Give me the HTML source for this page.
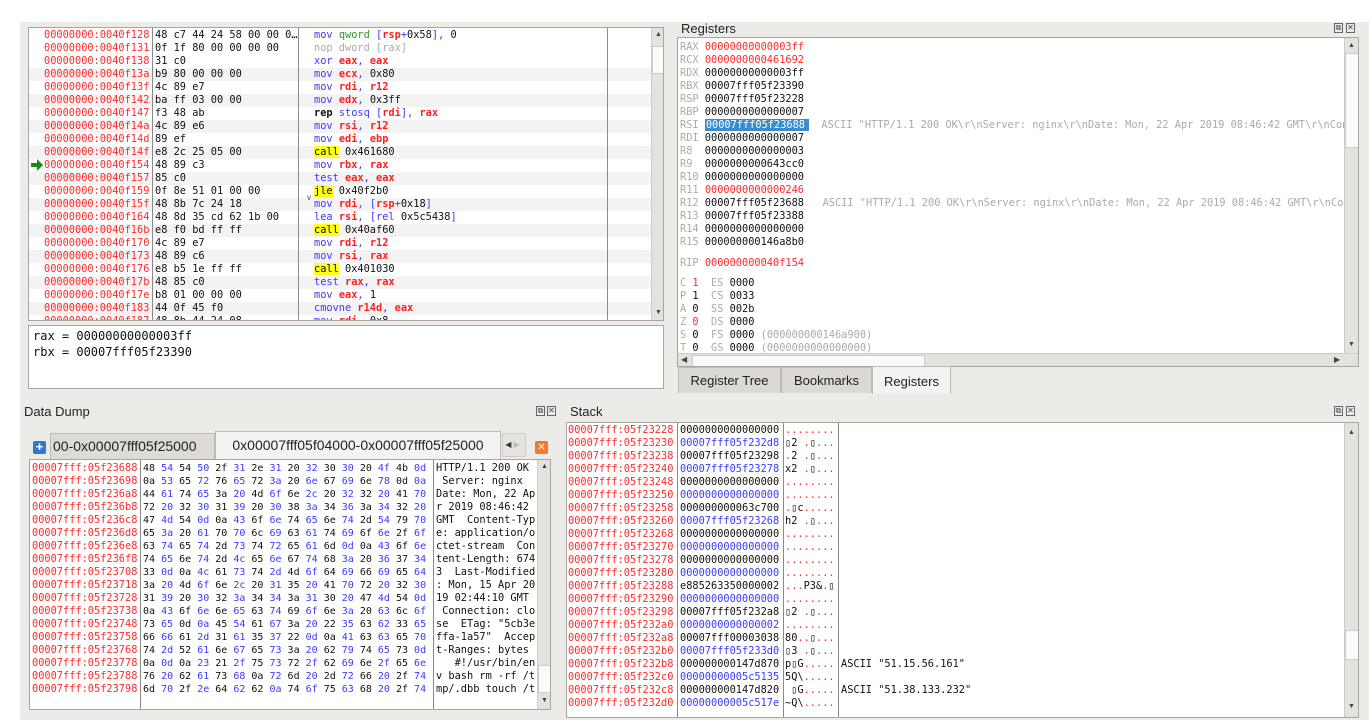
<!DOCTYPE html>
<html><head><meta charset="utf-8"><style>
*{margin:0;padding:0;box-sizing:border-box}
body{width:1369px;height:726px;background:#fff;position:relative;overflow:hidden;font-family:"Liberation Sans",sans-serif}
.bg{position:absolute;left:20px;top:22px;width:1349px;height:698px;background:#edebe8}
.abs{position:absolute}
.box{position:absolute;background:#fff;border:1px solid #a9a6a2}
.m{font-family:"DejaVu Sans Mono","Liberation Mono",monospace;font-size:10.3px;line-height:13px;white-space:pre;color:#111}
.r{color:#ff2a2a}.b{color:#3a3aff}.g{color:#2a9a2a}.gr{color:#aaa}.rb{color:#ff1e1e;font-weight:bold}.k{font-weight:bold;color:#111}
.y{background:#ffff20}
.vl{position:absolute;width:1px;background:#8a8a8a}
.sb{position:absolute;background:#e4e2df;border-left:1px solid #cfcdca}
.title{position:absolute;font-size:13px;color:#222}
.ic{position:absolute;width:9px;height:10px;border:1px solid #666;font-size:8px;line-height:8px;text-align:center;color:#444}
.row{height:13px}
.alt{background:#f3f3f3}
.tab{position:absolute;font-size:13px;color:#222;text-align:center;border:1px solid #bdbab6;border-bottom:none}
i{font-style:normal;color:#3a3aff}
.d{color:#ff2a2a}
</style></head><body>
<div class="bg"></div>

<!-- Disassembly -->
<div class="box" style="left:28px;top:27px;width:636px;height:294px;overflow:hidden">
 <div class="abs m" style="left:0;top:1px;width:622px">
  <div class="row"></div><div class="row alt"></div><div class="row"></div><div class="row alt"></div><div class="row"></div><div class="row alt"></div><div class="row"></div><div class="row alt"></div><div class="row"></div><div class="row alt"></div><div class="row"></div><div class="row alt"></div><div class="row"></div><div class="row alt"></div><div class="row"></div><div class="row alt"></div><div class="row"></div><div class="row alt"></div><div class="row"></div><div class="row alt"></div><div class="row"></div><div class="row alt"></div><div class="row"></div>
 </div>
 <div class="abs m r" style="left:15px;top:1px">00000000:0040f128
00000000:0040f131
00000000:0040f138
00000000:0040f13a
00000000:0040f13f
00000000:0040f142
00000000:0040f147
00000000:0040f14a
00000000:0040f14d
00000000:0040f14f
00000000:0040f154
00000000:0040f157
00000000:0040f159
00000000:0040f15f
00000000:0040f164
00000000:0040f16b
00000000:0040f170
00000000:0040f173
00000000:0040f176
00000000:0040f17b
00000000:0040f17e
00000000:0040f183
00000000:0040f187</div>
 <svg class="abs" style="left:2px;top:131px" width="12" height="12"><path d="M0 4h6V0l6 6-6 6V8H0z" fill="#1a8a1a"/></svg>
 <div class="abs m" style="left:126px;top:1px">48 c7 44 24 58 00 00 0…
0f 1f 80 00 00 00 00
31 c0
b9 80 00 00 00
4c 89 e7
ba ff 03 00 00
f3 48 ab
4c 89 e6
89 ef
e8 2c 25 05 00
48 89 c3
85 c0
0f 8e 51 01 00 00
48 8b 7c 24 18
48 8d 35 cd 62 1b 00
e8 f0 bd ff ff
4c 89 e7
48 89 c6
e8 b5 1e ff ff
48 85 c0
b8 01 00 00 00
44 0f 45 f0
48 8b 44 24 08</div>
 <div class="abs m" style="left:285px;top:1px"><span class="b">mov</span> <span class="g">qword</span> <span class="b">[</span><span class="rb">rsp</span><span class="b">+</span>0x58<span class="b">]</span><span class="b">,</span> 0
<span class="gr">nop dword [rax]</span>
<span class="b">xor</span> <span class="rb">eax</span><span class="b">,</span> <span class="rb">eax</span>
<span class="b">mov</span> <span class="rb">ecx</span><span class="b">,</span> 0x80
<span class="b">mov</span> <span class="rb">rdi</span><span class="b">,</span> <span class="rb">r12</span>
<span class="b">mov</span> <span class="rb">edx</span><span class="b">,</span> 0x3ff
<span class="k">rep</span> <span class="b">stosq [</span><span class="rb">rdi</span><span class="b">],</span> <span class="rb">rax</span>
<span class="b">mov</span> <span class="rb">rsi</span><span class="b">,</span> <span class="rb">r12</span>
<span class="b">mov</span> <span class="rb">edi</span><span class="b">,</span> <span class="rb">ebp</span>
<span class="y">call</span> 0x461680
<span class="b">mov</span> <span class="rb">rbx</span><span class="b">,</span> <span class="rb">rax</span>
<span class="b">test</span> <span class="rb">eax</span><span class="b">,</span> <span class="rb">eax</span>
<span class="y">jle</span> 0x40f2b0
<span class="b">mov</span> <span class="rb">rdi</span><span class="b">,</span> <span class="b">[</span><span class="rb">rsp</span><span class="b">+</span>0x18<span class="b">]</span>
<span class="b">lea</span> <span class="rb">rsi</span><span class="b">,</span> <span class="b">[rel</span> 0x5c5438<span class="b">]</span>
<span class="y">call</span> 0x40af60
<span class="b">mov</span> <span class="rb">rdi</span><span class="b">,</span> <span class="rb">r12</span>
<span class="b">mov</span> <span class="rb">rsi</span><span class="b">,</span> <span class="rb">rax</span>
<span class="y">call</span> 0x401030
<span class="b">test</span> <span class="rb">rax</span><span class="b">,</span> <span class="rb">rax</span>
<span class="b">mov</span> <span class="rb">eax</span><span class="b">,</span> 1
<span class="b">cmovne</span> <span class="rb">r14d</span><span class="b">,</span> <span class="rb">eax</span>
<span class="b">mov</span> <span class="rb">rdi</span><span class="b">,</span> 0x8</div>
 <div class="abs" style="left:278px;top:165px;font-size:8px;color:#444">v</div>
 <div class="vl" style="left:123px;top:0;height:294px"></div>
 <div class="vl" style="left:269px;top:0;height:294px"></div>
 <div class="vl" style="left:578px;top:0;height:294px"></div>
 <div class="sb" style="left:622px;top:0;width:13px;height:292px"><div class="abs" style="left:0;top:18px;width:12px;height:28px;background:#fafafa;border:1px solid #ccc"></div><div class="abs" style="left:3px;top:3px;font-size:7px;color:#444">▲</div><div class="abs" style="left:3px;top:281px;font-size:7px;color:#444">▼</div></div>
</div>

<!-- Expression -->
<div class="box" style="left:28px;top:325px;width:636px;height:64px">
 <div class="abs m" style="left:4px;top:2px;font-size:12px;line-height:16px">rax = 00000000000003ff
rbx = 00007fff05f23390</div>
</div>

<!-- Registers -->
<div class="title" style="left:681px;top:21px">Registers</div>
<div class="ic" style="left:1334px;top:23px">⧉</div><div class="ic" style="left:1346px;top:23px">✕</div>
<div class="box" style="left:677px;top:37px;width:682px;height:330px;overflow:hidden">
 <div class="abs m" style="left:2px;top:3px"><span class="gr">RAX</span> <span class="r">00000000000003ff</span>
<span class="gr">RCX</span> <span class="r">0000000000461692</span>
<span class="gr">RDX</span> 00000000000003ff
<span class="gr">RBX</span> 00007fff05f23390
<span class="gr">RSP</span> 00007fff05f23228
<span class="gr">RBP</span> 0000000000000007
<span class="gr">RSI</span> <span style="background:#3a8ccc;color:#fff;padding:0 4px 0 1px">00007fff05f23688</span>  <span class="gr">ASCII "HTTP/1.1 200 OK\r\nServer: nginx\r\nDate: Mon, 22 Apr 2019 08:46:42 GMT\r\nCont</span>
<span class="gr">RDI</span> 0000000000000007
<span class="gr">R8 </span> 0000000000000003
<span class="gr">R9 </span> 0000000000643cc0
<span class="gr">R10</span> 0000000000000000
<span class="gr">R11</span> <span class="r">0000000000000246</span>
<span class="gr">R12</span> 00007fff05f23688   <span class="gr">ASCII "HTTP/1.1 200 OK\r\nServer: nginx\r\nDate: Mon, 22 Apr 2019 08:46:42 GMT\r\nCont</span>
<span class="gr">R13</span> 00007fff05f23388
<span class="gr">R14</span> 0000000000000000
<span class="gr">R15</span> 000000000146a8b0</div>
 <div class="abs m" style="left:2px;top:219px"><span class="gr">RIP</span> <span class="r">000000000040f154</span></div>
 <div class="abs m" style="left:2px;top:239px"><span class="gr">C</span> <span class="r">1</span>  <span class="gr">ES</span> 0000
<span class="gr">P</span> 1  <span class="gr">CS</span> 0033
<span class="gr">A</span> 0  <span class="gr">SS</span> 002b
<span class="gr">Z</span> <span class="r">0</span>  <span class="gr">DS</span> 0000
<span class="gr">S</span> 0  <span class="gr">FS</span> 0000 <span class="gr">(000000000146a900)</span>
<span class="gr">T</span> 0  <span class="gr">GS</span> 0000 <span class="gr">(0000000000000000)</span></div>
 <div class="sb" style="left:666px;top:0;width:15px;height:315px"><div class="abs" style="left:3px;top:4px;font-size:7px;color:#444">▲</div><div class="abs" style="left:0;top:15px;width:14px;height:95px;background:#fafafa;border:1px solid #ccc"></div><div class="abs" style="left:3px;top:303px;font-size:7px;color:#444">▼</div></div>
 <div class="abs" style="left:0;top:315px;width:681px;height:15px;background:#e4e2df;border-top:1px solid #cfcdca"><div class="abs" style="left:14px;top:1px;width:233px;height:12px;background:#fafafa;border:1px solid #ccc"></div><div class="abs" style="left:3px;top:1px;font-size:8px;color:#444">◀</div><div class="abs" style="left:656px;top:1px;font-size:8px;color:#444">▶</div></div>
</div>
<div class="tab" style="left:678px;top:367px;width:103px;height:26px;background:#dcd9d5;line-height:25px">Register Tree</div>
<div class="tab" style="left:781px;top:367px;width:91px;height:26px;background:#dcd9d5;line-height:25px">Bookmarks</div>
<div class="tab" style="left:872px;top:366px;width:79px;height:28px;background:#f4f3f1;line-height:29px">Registers</div>

<!-- Data Dump -->
<div class="title" style="left:24px;top:404px">Data Dump</div>
<div class="ic" style="left:536px;top:406px">⧉</div><div class="ic" style="left:547px;top:406px">✕</div>
<div class="abs" style="left:33px;top:441px;width:13px;height:13px;background:#2d7ad0;border-radius:2px;color:#fff;font-size:13px;line-height:12px;text-align:center;font-weight:bold">+</div>
<div class="tab" style="left:50px;top:433px;width:165px;height:26px;background:#dedbd7;line-height:25px;font-size:14px;text-align:left;padding-left:2px">00-0x00007fff05f25000</div>
<div class="tab" style="left:215px;top:431px;width:286px;height:29px;background:#f4f3f1;line-height:27px;font-size:14px">0x00007fff05f04000-0x00007fff05f25000</div>
<div class="abs" style="left:502px;top:433px;width:24px;height:24px;background:#e6e3df;border:1px solid #cfcdca;font-size:8px;line-height:22px;color:#333">&nbsp;◀ <span style="color:#bbb">▶</span></div>
<div class="abs" style="left:535px;top:441px;width:13px;height:13px;background:#f07b2c;border-radius:2px;color:#fff;font-size:10px;line-height:13px;text-align:center">✕</div>
<div class="box" style="left:29px;top:459px;width:522px;height:251px;overflow:hidden">
 <div class="abs m r" style="left:2px;top:2px">00007fff:05f23688
00007fff:05f23698
00007fff:05f236a8
00007fff:05f236b8
00007fff:05f236c8
00007fff:05f236d8
00007fff:05f236e8
00007fff:05f236f8
00007fff:05f23708
00007fff:05f23718
00007fff:05f23728
00007fff:05f23738
00007fff:05f23748
00007fff:05f23758
00007fff:05f23768
00007fff:05f23778
00007fff:05f23788
00007fff:05f23798</div>
 <div class="abs m" style="left:113px;top:2px;font-size:10px">48 <i>54</i> 54 <i>50</i> 2f <i>31</i> 2e <i>31</i> 20 <i>32</i> 30 <i>30</i> 20 <i>4f</i> 4b <i>0d</i>
0a <i>53</i> 65 <i>72</i> 76 <i>65</i> 72 <i>3a</i> 20 <i>6e</i> 67 <i>69</i> 6e <i>78</i> 0d <i>0a</i>
44 <i>61</i> 74 <i>65</i> 3a <i>20</i> 4d <i>6f</i> 6e <i>2c</i> 20 <i>32</i> 32 <i>20</i> 41 <i>70</i>
72 <i>20</i> 32 <i>30</i> 31 <i>39</i> 20 <i>30</i> 38 <i>3a</i> 34 <i>36</i> 3a <i>34</i> 32 <i>20</i>
47 <i>4d</i> 54 <i>0d</i> 0a <i>43</i> 6f <i>6e</i> 74 <i>65</i> 6e <i>74</i> 2d <i>54</i> 79 <i>70</i>
65 <i>3a</i> 20 <i>61</i> 70 <i>70</i> 6c <i>69</i> 63 <i>61</i> 74 <i>69</i> 6f <i>6e</i> 2f <i>6f</i>
63 <i>74</i> 65 <i>74</i> 2d <i>73</i> 74 <i>72</i> 65 <i>61</i> 6d <i>0d</i> 0a <i>43</i> 6f <i>6e</i>
74 <i>65</i> 6e <i>74</i> 2d <i>4c</i> 65 <i>6e</i> 67 <i>74</i> 68 <i>3a</i> 20 <i>36</i> 37 <i>34</i>
33 <i>0d</i> 0a <i>4c</i> 61 <i>73</i> 74 <i>2d</i> 4d <i>6f</i> 64 <i>69</i> 66 <i>69</i> 65 <i>64</i>
3a <i>20</i> 4d <i>6f</i> 6e <i>2c</i> 20 <i>31</i> 35 <i>20</i> 41 <i>70</i> 72 <i>20</i> 32 <i>30</i>
31 <i>39</i> 20 <i>30</i> 32 <i>3a</i> 34 <i>34</i> 3a <i>31</i> 30 <i>20</i> 47 <i>4d</i> 54 <i>0d</i>
0a <i>43</i> 6f <i>6e</i> 6e <i>65</i> 63 <i>74</i> 69 <i>6f</i> 6e <i>3a</i> 20 <i>63</i> 6c <i>6f</i>
73 <i>65</i> 0d <i>0a</i> 45 <i>54</i> 61 <i>67</i> 3a <i>20</i> 22 <i>35</i> 63 <i>62</i> 33 <i>65</i>
66 <i>66</i> 61 <i>2d</i> 31 <i>61</i> 35 <i>37</i> 22 <i>0d</i> 0a <i>41</i> 63 <i>63</i> 65 <i>70</i>
74 <i>2d</i> 52 <i>61</i> 6e <i>67</i> 65 <i>73</i> 3a <i>20</i> 62 <i>79</i> 74 <i>65</i> 73 <i>0d</i>
0a <i>0d</i> 0a <i>23</i> 21 <i>2f</i> 75 <i>73</i> 72 <i>2f</i> 62 <i>69</i> 6e <i>2f</i> 65 <i>6e</i>
76 <i>20</i> 62 <i>61</i> 73 <i>68</i> 0a <i>72</i> 6d <i>20</i> 2d <i>72</i> 66 <i>20</i> 2f <i>74</i>
6d <i>70</i> 2f <i>2e</i> 64 <i>62</i> 62 <i>0a</i> 74 <i>6f</i> 75 <i>63</i> 68 <i>20</i> 2f <i>74</i></div>
 <div class="abs m" style="left:406px;top:2px">HTTP/1.1 200 OK 
 Server: nginx  
Date: Mon, 22 Ap
r 2019 08:46:42 
GMT  Content-Typ
e: application/o
ctet-stream  Con
tent-Length: 674
3  Last-Modified
: Mon, 15 Apr 20
19 02:44:10 GMT 
 Connection: clo
se  ETag: "5cb3e
ffa-1a57"  Accep
t-Ranges: bytes 
   #!/usr/bin/en
v bash rm -rf /t
mp/.dbb touch /t</div>
 <div class="vl" style="left:110px;top:0;height:251px"></div>
 <div class="vl" style="left:403px;top:0;height:251px"></div>
 <div class="sb" style="left:507px;top:0;width:14px;height:249px"><div class="abs" style="left:3px;top:3px;font-size:7px;color:#444">▲</div><div class="abs" style="left:0;top:14px;width:13px;height:50px;background:#e4e2df"></div><div class="abs" style="left:0;top:205px;width:13px;height:28px;background:#fafafa;border:1px solid #ccc"></div><div class="abs" style="left:3px;top:237px;font-size:7px;color:#444">▼</div></div>
</div>

<!-- Stack -->
<div class="title" style="left:570px;top:404px">Stack</div>
<div class="ic" style="left:1334px;top:406px">⧉</div><div class="ic" style="left:1346px;top:406px">✕</div>
<div class="box" style="left:566px;top:422px;width:793px;height:296px;overflow:hidden">
 <div class="abs m r" style="left:1px;top:1px">00007fff:05f23228
00007fff:05f23230
00007fff:05f23238
00007fff:05f23240
00007fff:05f23248
00007fff:05f23250
00007fff:05f23258
00007fff:05f23260
00007fff:05f23268
00007fff:05f23270
00007fff:05f23278
00007fff:05f23280
00007fff:05f23288
00007fff:05f23290
00007fff:05f23298
00007fff:05f232a0
00007fff:05f232a8
00007fff:05f232b0
00007fff:05f232b8
00007fff:05f232c0
00007fff:05f232c8
00007fff:05f232d0</div>
 <div class="abs m" style="left:113px;top:1px">0000000000000000
<i>00007fff05f232d8</i>
00007fff05f23298
<i>00007fff05f23278</i>
0000000000000000
<i>0000000000000000</i>
000000000063c700
<i>00007fff05f23268</i>
0000000000000000
<i>0000000000000000</i>
0000000000000000
<i>0000000000000000</i>
e885263350000002
<i>0000000000000000</i>
00007fff05f232a8
<i>0000000000000002</i>
00007fff00003038
<i>00007fff05f233d0</i>
000000000147d870
<i>00000000005c5135</i>
000000000147d820
<i>00000000005c517e</i></div>
 <div class="abs m" style="left:218px;top:1px"><span class="d">........</span>
▯2 <span class="d">.</span>▯<span class="d">...</span>
<span class="d">.</span>2 <span class="d">.</span>▯<span class="d">...</span>
x2 <span class="d">.</span>▯<span class="d">...</span>
<span class="d">........</span>
<span class="d">........</span>
<span class="d">.</span>▯c<span class="d">.....</span>
h2 <span class="d">.</span>▯<span class="d">...</span>
<span class="d">........</span>
<span class="d">........</span>
<span class="d">........</span>
<span class="d">........</span>
<span class="d">...</span>P3&amp;<span class="d">.</span>▯
<span class="d">........</span>
▯2 <span class="d">.</span>▯<span class="d">...</span>
<span class="d">........</span>
80<span class="d">..</span>▯<span class="d">...</span>
▯3 <span class="d">.</span>▯<span class="d">...</span>
p▯G<span class="d">.....</span>
5Q\<span class="d">.....</span>
 ▯G<span class="d">.....</span>
~Q\<span class="d">.....</span></div>
 <div class="abs m" style="left:274px;top:235px">ASCII "51.15.56.161"

ASCII "51.38.133.232"</div>
 <div class="vl" style="left:110px;top:0;height:296px"></div>
 <div class="vl" style="left:216px;top:0;height:296px"></div>
 <div class="vl" style="left:271px;top:0;height:296px"></div>
 <div class="sb" style="left:777px;top:0;width:15px;height:294px"><div class="abs" style="left:3px;top:6px;font-size:7px;color:#444">▲</div><div class="abs" style="left:0;top:17px;width:14px;height:190px;background:#e4e2df"></div><div class="abs" style="left:0;top:207px;width:14px;height:30px;background:#fafafa;border:1px solid #ccc"></div><div class="abs" style="left:3px;top:280px;font-size:7px;color:#444">▼</div></div>
</div>
</body></html>
